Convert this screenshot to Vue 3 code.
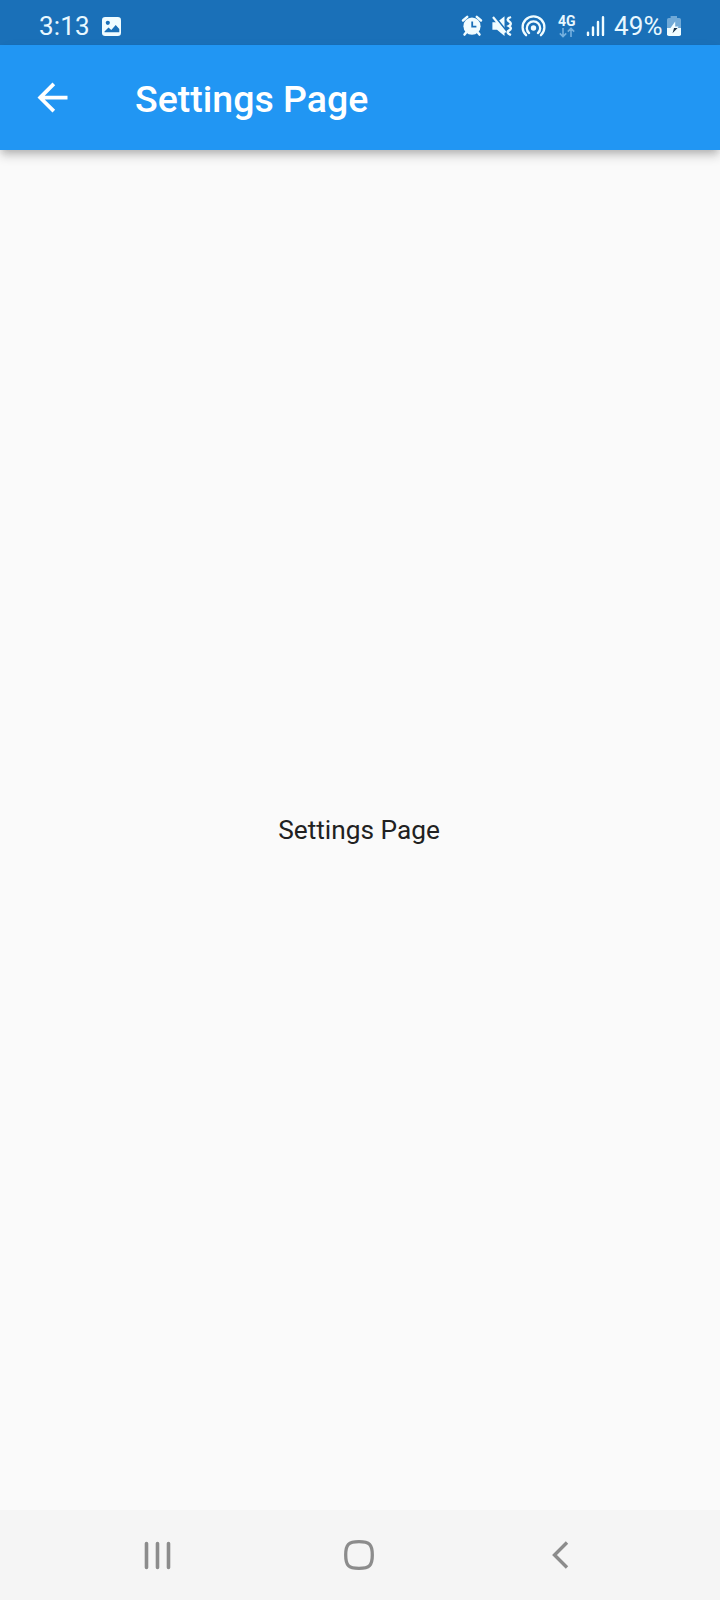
<script setup>
const title = 'Settings Page'
const time = '3:13'
const battery = '49%'
</script>

<template>
  <div class="screen">
    <header class="status">
      <span class="clock">{{ time }}</span>
      <svg class="picture" width="20" height="45" viewBox="101 0 20 45">
        <rect x="102" y="17" width="19" height="19" rx="3.2" fill="#f0fcff" />
        <circle cx="107.8" cy="22.8" r="2.1" fill="#1a70b8" />
        <path d="M104.5 31.5l4-4 2.8 2.6 4.4-5.2 3.6 4v3.4h-14.8z" fill="#1a70b8" />
      </svg>
      <span class="spacer"></span>
      <svg width="30" height="45" viewBox="458 0 30 45">
        <circle cx="472" cy="26.2" r="8.6" fill="#f0fcff" />
        <path d="M463 20.5l4.2-3.6M481 20.5l-4.2-3.6M466.5 32l-2 2.6M477.5 32l2 2.6" stroke="#f0fcff" stroke-width="2.5" stroke-linecap="round" />
        <path d="M472.2 21.5v5.2h4.2" fill="none" stroke="#1a70b8" stroke-width="1.8" />
      </svg>
      <svg width="29" height="45" viewBox="488 0 29 45">
        <path d="M492.4 22.2h4.6l7.5-6v19.8l-7.5-6.2h-4.6z" fill="#f0fcff" />
        <path d="M494.5 16.2l12.5 15.6" stroke="#1a70b8" stroke-width="2" />
        <path d="M493 17l12.5 15.5" stroke="#f0fcff" stroke-width="2.2" />
        <path d="M511 17c-4 1.6-4 3.2-1.8 4.6s2.2 3-.4 4.4c2.6 1.4 2.8 3 .4 4.4s-2.2 3 1.8 4.6" fill="none" stroke="#f0fcff" stroke-width="2.4" />
      </svg>
      <svg width="38" height="45" viewBox="517 0 38 45">
        <circle cx="533.5" cy="28" r="2.7" fill="#f0fcff" />
        <g fill="none" stroke="#f0fcff" stroke-width="2.3" stroke-linecap="round">
          <path d="M529.1 33.1a6.7 6.7 0 1 1 8.8 0" />
          <path d="M526.1 35.2a10.9 10.9 0 1 1 14.8 0" />
        </g>
      </svg>
      <div class="network">
        <span class="generation">4G</span>
        <svg width="18" height="11" viewBox="558 27 18 11">
          <path d="M563 28v8.4M559.8 33.4l3.2 3.2 3.2-3.2M571 37v-8.4M567.8 31.6l3.2-3.2 3.2 3.2" fill="none" stroke="#75b0df" stroke-width="1.6" />
        </svg>
      </div>
      <svg class="signal" width="24" height="45" viewBox="584 0 24 45">
        <path d="M588 32.6v2.3M593 27.5v7.4M598 22v12.9M603 17.3v17.6" stroke="#f0fcff" stroke-width="2.4" stroke-linecap="round" />
      </svg>
      <span class="percent">{{ battery }}</span>
      <svg class="battery" width="16" height="45" viewBox="666 0 16 45">
        <path d="M670.6 16h6.4v2h2.2q1.8 0 1.8 1.8V28h-14v-8.2q0-1.8 1.8-1.8h1.8z" fill="#70a9d7" />
        <path d="M667 28h14v6.2q0 1.8-1.8 1.8h-10.4q-1.8 0-1.8-1.8z" fill="#f0fcff" />
        <path d="M675.2 21.5l-4.7 6.5h7.2l.8-1.5h-3.3z" fill="#f0fcff" />
        <path d="M674 28h3.6l-5.1 5.2 1-3.2z" fill="#173149" />
      </svg>
    </header>

    <div class="appbar">
      <svg class="back" width="45" height="45" viewBox="0 0 24 24">
        <path d="M20 11H7.83l5.59-5.59L12 4l-8 8 8 8 1.41-1.41L7.83 13H20v-2z" fill="#fff" />
      </svg>
      <h1 class="title">{{ title }}</h1>
    </div>

    <main class="content"><p class="message">{{ title }}</p></main>

    <nav class="nav">
      <svg width="28" height="32" viewBox="0 0 28 32">
        <path d="M2.5 4.5v24M13.5 4.5v24M24.5 4.5v24" stroke="#8c8c8c" stroke-width="3.6" stroke-linecap="round" />
      </svg>
      <svg class="home" width="32" height="32" viewBox="0 0 32 32">
        <path d="M16 2.7c10.5 0 13.3 2.8 13.3 13.3S26.5 29.3 16 29.3 2.7 26.5 2.7 16 5.5 2.7 16 2.7z" fill="none" stroke="#8c8c8c" stroke-width="3.3" />
      </svg>
      <svg width="18" height="32" viewBox="0 0 18 32">
        <path d="M16 3.5L3.5 16 16 28.5" fill="none" stroke="#8c8c8c" stroke-width="3.4" />
      </svg>
    </nav>
  </div>
</template>

<style>
body {
  margin: 0;
}
</style>

<style scoped>
.screen {
  width: 720px;
  height: 1600px;
  display: flex;
  flex-direction: column;
  overflow: hidden;
  background: #fafafa;
  font-family: Roboto, sans-serif;
}
svg {
  display: block;
  flex: none;
}
.status {
  height: 45px;
  flex: none;
  display: flex;
  box-sizing: border-box;
  padding: 0 38px;
  background: #1a70b8;
  color: #e8f8ff;
}
.clock,
.percent {
  font-size: 26px;
  line-height: 52px;
  white-space: nowrap;
}
.clock {
  width: 63px;
  padding-left: 1px;
  box-sizing: border-box;
  letter-spacing: 0.2px;
}
.spacer {
  flex: 1;
}
.network {
  width: 29px;
  padding: 14px 0 0 3px;
  box-sizing: border-box;
}
.generation {
  display: block;
  height: 13px;
  font-size: 14px;
  line-height: 14px;
  font-weight: 700;
}
.percent {
  width: 58px;
  padding-left: 6px;
  box-sizing: border-box;
  letter-spacing: 0.2px;
}
.appbar {
  height: 105px;
  flex: none;
  display: flex;
  align-items: center;
  box-sizing: border-box;
  padding-left: 30px;
  background: #2196f3;
  box-shadow: 0 3.75px 7.5px -1.875px rgba(0, 0, 0, 0.2), 0 7.5px 9.375px rgba(0, 0, 0, 0.14), 0 1.875px 18.75px rgba(0, 0, 0, 0.02);
}
.title {
  margin: 2px 0 0 60px;
  color: #fff;
  font-size: 37.5px;
  line-height: 44px;
  font-weight: 500;
}
.content {
  flex: 1;
  display: flex;
  align-items: center;
  justify-content: center;
}
.message {
  margin: 0 2px 0 0;
  font-size: 26.25px;
  line-height: 31px;
  color: #212121;
}
.nav {
  height: 90px;
  flex: none;
  display: flex;
  align-items: center;
  justify-content: space-between;
  box-sizing: border-box;
  padding: 0 151px 0 144px;
  background: #f5f5f5;
}
.home {
  margin-right: 6px;
}
</style>
